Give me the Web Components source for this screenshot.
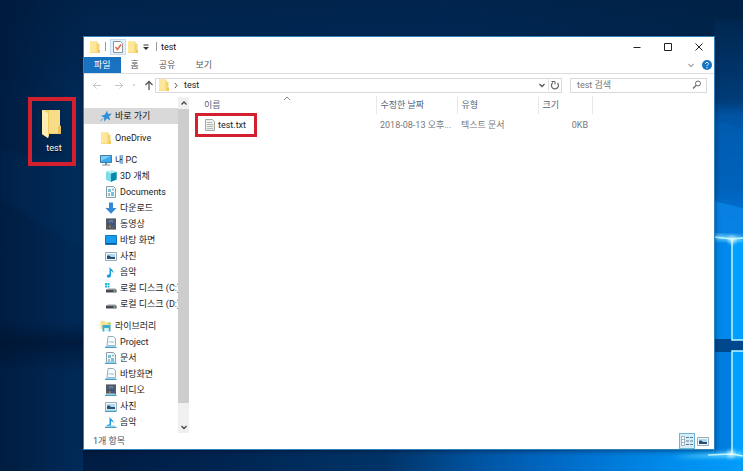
<!DOCTYPE html>
<html lang="ko">
<head>
<meta charset="utf-8">
<title>test</title>
<style>
html,body{height:100%;margin:0}
body{font:9px/16px Roboto,"Noto Sans CJK KR",sans-serif;color:#222;overflow:hidden}
</style>
</head>
<body>
<desk-top>
  <desktop-shortcut label="test"></desktop-shortcut>
  <explorer-window>
    <title-bar slot="title" label="test"></title-bar>
    <ribbon-tabs slot="ribbon"></ribbon-tabs>
    <address-bar slot="address" folder="test"></address-bar>
    <nav-pane slot="nav">
      <nav-group>
        <nav-item icon="star" root selected>바로 가기</nav-item>
      </nav-group>
      <nav-group>
        <nav-item icon="folder" root>OneDrive</nav-item>
      </nav-group>
      <nav-group>
        <nav-item icon="pc" root>내 PC</nav-item>
        <nav-item icon="cube">3D 개체</nav-item>
        <nav-item icon="doc">Documents</nav-item>
        <nav-item icon="down">다운로드</nav-item>
        <nav-item icon="film">동영상</nav-item>
        <nav-item icon="desktop">바탕 화면</nav-item>
        <nav-item icon="photo">사진</nav-item>
        <nav-item icon="music">음악</nav-item>
        <nav-item icon="drivec">로컬 디스크 (C:)</nav-item>
        <nav-item icon="drive">로컬 디스크 (D:)</nav-item>
      </nav-group>
      <nav-group>
        <nav-item icon="library" root>라이브러리</nav-item>
        <nav-item icon="libfile">Project</nav-item>
        <nav-item icon="libdoc">문서</nav-item>
        <nav-item icon="libfile">바탕화면</nav-item>
        <nav-item icon="libfilm">비디오</nav-item>
        <nav-item icon="libphoto">사진</nav-item>
        <nav-item icon="libmusic">음악</nav-item>
      </nav-group>
    </nav-pane>
    <file-list slot="files"></file-list>
    <status-bar slot="status">1개 항목</status-bar>
  </explorer-window>
</desk-top>
<script>
const stand = '<path d="M1 9.5h9l1.5 2.500H0z" fill="#9ad0e6"/><path d="M0 11.500h11.500" stroke="#4a9cbd"/>';
const note = '<path d="M4.500 0.500C5 3 9 3.500 8.500 7.500C8 5.800 7 5.200 6 5V9.500C6 12 2 12.500 1.800 10.300C1.800 8.700 3.300 8.300 4.500 8.600z" fill="#1b9ade"/>';
const film = '<path d="M1 0.500h10v11H1z" fill="#343a43"/><path d="M2 1.500v9M10 1.500v9" stroke="#b9bec5" stroke-dasharray="1 1"/><path d="M3.500 1.500h5v4h-5z" fill="#66809d"/><path d="M3.500 6.500h5v4h-5z" fill="#8c7564"/><path d="M5 3l3 2v4l-2 1z" fill="#38588b"/>';
const docu = '<path d="M1.500 0.500h7l2 2v9h-9z" fill="#f3fafc" stroke="#8a9da6"/><path d="M3 3h3v3H3zM6 6h3v4H6z" fill="#79c0d8"/><path d="M4 7v3M8 2.500v2" stroke="#4f8298"/>';
const photo = '<path d="M0.500 2.500h11v8H0.500z" fill="#f4f8fb" stroke="#9aabb8"/><path d="M2 4h8v5H2z" fill="#aed9f0"/><path d="M2 6c2-1 3 0 4 1h4v2H2z" fill="#274f75"/>';
const disk = '<path d="M1.500 7.500L3 6h7l1.500 1.500z" fill="#c9cdd0"/><path d="M1 7.500h10.500v3H1z" fill="#464b50"/><path d="M8.500 9h2" stroke="#b7e6bb"/>';
const folder = '<path d="M1 0.500h7.500v2L10.500 3v9H1z" fill="#f3d470"/><path d="M1 0.500h6.500v11H1z" fill="#ffe79a"/><path d="M9 9h2v3H9z" fill="#f0c95c"/>';
const chev = '<path d="M3.500 5l2.500 2.500 2.500-2.500" fill="none" stroke="currentColor" stroke-width="1.300"/>';
const ICONS = {
  folder,
  star:'<path d="M7 0.500l1 3.500 4-.500-3 3 1.500 4-3.500-2-3 3 .2-4L1 6l4-1.500z" fill="#2f8fd8"/><path d="M3 8.500L0.500 11" stroke="#75899a"/>',
  pc:'<path d="M0.500 1.500h11v7H0.500z" fill="#39a9ee" stroke="#407da6"/><path d="M1 2h10L1 7z" fill="#79cdf8"/><path d="M5 9h2v1.500h3v1H2v-1h3z" fill="#7893a5"/>',
  cube:'<path d="M1 2l6-1.500L11.500 2v7.500L6 11.800 1 9.500z" fill="#25b1ca"/><path d="M1 2l5 1.500V11.800L1 9.500z" fill="#7bdde8"/><path d="M6 3.500L11.500 2v7.500L6 11.800z" fill="#0787aa"/><path d="M1 2l6-1.500L11.500 2 6 3.500z" fill="#b9f0f5"/>',
  doc:docu,
  down:'<path d="M4 0.500h4V6h3.500L6 11.800 0.500 6H4z" fill="#3489d4"/>',
  film,
  desktop:'<path d="M0.500 1.500h11v9H0.500z" fill="#189cf0" stroke="#1377bb"/><path d="M1 9.500h10" stroke="#0d5d98"/>',
  photo, music:note,
  drivec:disk+'<path d="M0 1h2v2H0zM2.500 1h2v2h-2zM0 3.500h2v2H0zM2.500 3.500h2v2h-2z" fill="#20b6dc"/>',
  drive:disk,
  library:'<path d="M0.500 1h4l1 1.500h5V9h-10z" fill="#ffe08a"/><path d="M2.500 5h8v6.500h-2V8h-4v3.500h-2z" fill="#3aaed0"/><path d="M4.500 8h4v3h-4z" fill="#d6f1f2"/><path d="M8 2.500h3v2H8z" fill="#a8d579"/>',
  libfile:'<path d="M3 0.500h5.500l2 2v7H2z" fill="#f7fbfc" stroke="#9aaeb8"/><path d="M3.500 6h5.500" stroke="#8fc5da"/>'+stand,
  libdoc:docu+stand, libfilm:film+stand, libphoto:photo+stand, libmusic:note+stand,
  text:'<path d="M1.500 0.500h7l2 2v9h-9z" fill="#eef0ee" stroke="#a3a9a5"/><path d="M3 3.500h5M3 5.500h6M3 7.500h6M3 9.500h6" stroke="#b3bab5"/>',
  check:'<path d="M1.500 0.500h7l2 2v9h-9z" fill="#fff" stroke="#8d9399"/><path d="M3.500 6l2 2.500L9 3.500" fill="none" stroke="#df6a3c" stroke-width="1.500"/>',
  menu:'<path d="M3.500 4h5" stroke="#333"/><path d="M3 6h6L6 9z" fill="#333"/>',
  min:'<path d="M2.500 6.500h7" stroke="#222"/>',
  max:'<path d="M2.500 2.500h7v7h-7z" fill="none" stroke="#222"/>',
  close:'<path d="M2.500 2.500l7 7M9.500 2.500l-7 7" stroke="#222"/>',
  chev,
  up2:'<path d="M3.500 7.500l2.500-2.500 2.500 2.500" fill="none" stroke="currentColor" stroke-width="1.300"/>',
  sort:'<path d="M3 7l3-3 3 3" fill="none" stroke="#8a8a8a"/>',
  right:'<path d="M5 4l2 2.500-2 2.500" fill="none" stroke="#555"/>',
  back:'<path d="M10 6.500H2.500M5.500 3.500l-3 3 3 3" fill="none" stroke="#c6c6c6"/>',
  fwd:'<path d="M2 6.500h7.500M6.500 3.500l3 3-3 3" fill="none" stroke="#c6c6c6"/>',
  dot:'<path d="M4.500 5.500h3L6 7z" fill="#bbb"/>',
  up:'<path d="M6 11V2.500M2.500 6L6 2.500 9.500 6" fill="none" stroke="#555" stroke-width="1.300"/>',
  refresh:'<path d="M4 3.500A3.500 3.500 0 1 0 8.500 4" fill="none" stroke="#666" stroke-width="1.200"/><path d="M2.500 2.500h3.500v3" fill="none" stroke="#666"/>',
  search:'<circle cx="7" cy="4.500" r="2.500" fill="none" stroke="#666"/><path d="M5 6.500L2 9.500" stroke="#666" stroke-width="1.300"/>',
  help:'<circle cx="6" cy="6" r="5" fill="#1474c4"/><path d="M4.500 4.800C4.500 2.800 7.500 2.900 7.500 4.700C7.500 5.800 6 5.700 6 7.200M6 8.200v1.200" fill="none" stroke="#fff"/>',
  details:'<path d="M0.500 1.500h3v9h-3z" fill="#fff" stroke="#a7b1b8"/><path d="M1 4.500h2M1 7.500h2" stroke="#a7b1b8"/><path d="M5 2.500h3M9 2.500h3M5 6h3M9 6h3M5 9.500h3M9 9.500h3" stroke="#5b7f96"/>',
  open:'<path d="M1 0h7v26L7 28 1 24z" fill="#f4d47c"/><path d="M6 0h13v16l1 1v7H7z" fill="#efcb68"/><path d="M8 0h11v15l1 2v6H8z" fill="#f8dc88"/><path d="M1 0l6 3v25L1 24z" fill="#ffeeb2"/><path d="M17 16h3v8h-3z" fill="#e9c05b"/>'
};
function define(name, html, setup){
  customElements.define(name, class extends HTMLElement{
    connectedCallback(){
      if(this.shadowRoot) return;
      this.attachShadow({mode:'open'}).innerHTML = '<style>*{box-sizing:border-box}button,input{font:inherit;color:inherit;border:0;background:none;padding:0;margin:0;outline:0}button{display:inline-flex;align-items:center;justify-content:center}</style>' + (typeof html==='function'?html(this):html);
      if(setup) setup(this);
    }
  });
}
define('ui-icon', el => {
  const open = el.getAttribute('name')==='open';
  return `<style>:host{display:block;flex:none;width:${open?22:12}px;height:${open?28:12}px}svg{display:block;width:100%;height:100%}</style>
  <svg viewBox="0 0 ${open?'22 28':'12 12'}" aria-hidden="true">${ICONS[el.getAttribute('name')]}</svg>`;
});
define('desk-top', `
<style>
:host{display:block;position:relative;height:100vh;overflow:hidden;background:#00234d}
.wall{position:absolute;inset:0;width:100%;height:100%}
</style>
<svg class="wall" viewBox="0 0 743 471" preserveAspectRatio="xMaxYMid slice" aria-hidden="true">
  <defs>
    <linearGradient id="sky"><stop offset="0" stop-color="#001c40"/><stop offset=".12" stop-color="#002c5b"/><stop offset=".6" stop-color="#002f60"/><stop offset="1" stop-color="#002850"/></linearGradient>
    <linearGradient id="top" x2="0" y2="1"><stop offset="0" stop-color="#001a3a" stop-opacity=".5"/><stop offset="1" stop-color="#001a3a" stop-opacity="0"/></linearGradient>
    <linearGradient id="ray" x2="0" y2="1"><stop offset="0" stop-color="#00264f"/><stop offset=".25" stop-color="#003c78"/><stop offset=".3" stop-color="#0054a4"/><stop offset=".53" stop-color="#0064c0"/><stop offset=".58" stop-color="#0078dc"/><stop offset="1" stop-color="#0a94f4"/></linearGradient>
    <linearGradient id="floor"><stop offset="0" stop-color="#001c42"/><stop offset=".2" stop-color="#002450"/><stop offset=".46" stop-color="#003468"/><stop offset=".6" stop-color="#0054a2"/><stop offset=".75" stop-color="#0070ce"/><stop offset=".9" stop-color="#008eee"/><stop offset="1" stop-color="#009cfc"/></linearGradient>
    <linearGradient id="hor" x2="0" y2="1"><stop offset="0" stop-color="#00122e" stop-opacity="0"/><stop offset=".4" stop-color="#00122e" stop-opacity=".6"/><stop offset="1" stop-color="#00122e" stop-opacity="0"/></linearGradient>
    <filter id="b" x="-20%" y="-200%" width="140%" height="500%"><feGaussianBlur stdDeviation="2"/></filter>
    <filter id="s"><feGaussianBlur stdDeviation=".6"/></filter>
  </defs>
  <path d="M0 0h743v471H0z" fill="url(#sky)"/>
  <path d="M0 0h743v100H0z" fill="url(#top)"/>
  <path d="M0 150l90 14v90L0 200z" fill="#003568" opacity=".2" filter="url(#b)"/>
  <path d="M0 322h90v50H0z" fill="url(#hor)"/>
  <path d="M83 445h660v26H83z" fill="url(#floor)"/>
  <path d="M714 20h29v320h-29z" fill="url(#ray)"/>
  <path d="M714 120l29 9v80l-29-8z" fill="#0062b8" opacity=".5"/>
  <path d="M714 201l29 7v30h-29z" fill="#0b83e6" opacity=".7"/>
  <path d="M714 240h18v100h-18z" fill="#0088ec"/>
  <path d="M714 351h29v105h-29z" fill="#007de0"/>
  <path d="M714 339h29v13h-29z" fill="#00488d"/>
  <path d="M732 240h11v100h-11zM732 351h11v103h-11z" fill="#00a0ff"/>
  <path d="M714 237l29 2" stroke="#8eeaff" stroke-width="4" filter="url(#b)"/>
  <path d="M670 457l62-5 11 1v4z" fill="#6fdcff" filter="url(#b)"/>
  <path d="M743 238l-11 1-18-2M732 239v101h11M743 351h-11v103l11 2M732 454l-24 1" fill="none" stroke="#baf8ff" stroke-width="1.500" filter="url(#s)"/>
  <circle cx="732" cy="240" r="3" fill="#fff" filter="url(#b)"/><circle cx="731" cy="454" r="3" fill="#fff" filter="url(#b)"/>
</svg>
<slot></slot>`);
define('desktop-shortcut', el => `
<style>
:host{position:absolute;left:28px;top:97px}
button{flex-direction:column;width:48px;height:69px;border:4px solid #d3202f;color:#fff;padding-top:9px;gap:2px;justify-content:flex-start;text-shadow:0 1px 1px #000}
span{padding-left:4px}
</style>
<button><ui-icon name="open"></ui-icon><span>${el.getAttribute('label')}</span></button>`);
define('explorer-window', `
<style>
:host{position:absolute;inset:36px 28px 21px 83px;display:flex;flex-direction:column;background:#fff;border:1px solid #2f83b8;box-shadow:0 1px 5px rgba(0,10,40,.5)}
.body{flex:1;display:flex;min-height:0}
slot{display:contents}
</style>
<slot name="title"></slot><slot name="ribbon"></slot><slot name="address"></slot>
<div class="body"><slot name="nav"></slot><slot name="files"></slot></div>
<slot name="status"></slot>`);
define('title-bar', el => `
<style>
:host{display:flex;align-items:center;height:19px;padding-left:5px;color:#111}
.sep{width:1px;height:9px;background:#999;margin:0 4px}
.on{width:16px;height:16px;background:#e4f1fa;border:1px solid #c3def1}
.quick{display:flex;align-items:center;gap:1px}
.win{margin-left:auto;display:flex}
.win button{width:31px;height:19px}
</style>
<ui-icon name="folder"></ui-icon><i class="sep"></i>
<div class="quick"><button class="on" aria-label="속성"><ui-icon name="check"></ui-icon></button>
<button aria-label="새 폴더"><ui-icon name="folder"></ui-icon></button>
<button aria-label="사용자 지정"><ui-icon name="menu"></ui-icon></button></div>
<i class="sep"></i><span>${el.getAttribute('label')}</span>
<div class="win"><button aria-label="최소화"><ui-icon name="min"></ui-icon></button><button aria-label="최대화"><ui-icon name="max"></ui-icon></button><button aria-label="닫기"><ui-icon name="close"></ui-icon></button></div>`);
define('ribbon-tabs', `
<style>
:host{display:flex;align-items:center;height:17px;border-bottom:1px solid #dcdde0;color:#555}
.tab{height:16px;padding:0 10px}
.file{background:#1972c0;color:#fff}
.end{margin-left:auto;display:flex;gap:4px;padding-right:1px;color:#aaa}
</style>
<button class="tab file">파일</button><button class="tab">홈</button><button class="tab">공유</button><button class="tab">보기</button>
<div class="end"><button aria-label="리본 확장"><ui-icon name="chev"></ui-icon></button><button aria-label="도움말"><ui-icon name="help"></ui-icon></button></div>`);
define('address-bar', el => `
<style>
:host{display:flex;align-items:center;height:22px;padding:0 7px}
.move{display:flex;width:64px;justify-content:space-between}
.move div{display:flex}
.move .arrows{gap:10px}
.path,.find{display:flex;align-items:center;height:15px;border:1px solid #d9d9d9}
.path{flex:1;margin-right:8px;padding-left:2px;color:#222}
.crumb{padding:0 2px}
.tools{margin-left:auto;display:flex;color:#555}
.tools button+button{border-left:1px solid #e2e2e2}
.find{flex:0 1 137px;padding:0 3px 0 6px}
input{flex:1;min-width:0;height:13px}
input::placeholder{color:#777;opacity:1}
</style>
<div class="move"><div class="arrows"><button aria-label="뒤로"><ui-icon name="back"></ui-icon></button><button aria-label="앞으로"><ui-icon name="fwd"></ui-icon></button></div>
<button aria-label="최근 위치"><ui-icon name="dot"></ui-icon></button><button aria-label="위로"><ui-icon name="up"></ui-icon></button></div>
<div class="path"><ui-icon name="folder"></ui-icon><ui-icon name="right"></ui-icon><button class="crumb">${el.getAttribute('folder')}</button>
<div class="tools"><button aria-label="이전 위치"><ui-icon name="chev"></ui-icon></button><button aria-label="새로 고침"><ui-icon name="refresh"></ui-icon></button></div></div>
<div class="find"><input type="search" aria-label="test 검색" placeholder="test 검색"><button aria-label="검색"><ui-icon name="search"></ui-icon></button></div>`);
define('nav-pane', `
<style>
:host{flex:none;display:flex;width:105px}
nav{flex:1;min-width:0;overflow:hidden;display:flex;flex-direction:column;gap:6px;padding-top:12px}
.bar{width:11px;flex:none;display:flex;flex-direction:column;background:#f0f0f0;margin-top:1px;color:#444}
.bar button{height:12px}
.thumb{flex:1;background:#cdcdcd;margin-bottom:18px}
.bar ui-icon{margin:0 -1px}
</style>
<nav><slot></slot></nav>
<div class="bar"><button aria-label="위로 스크롤"><ui-icon name="up2"></ui-icon></button><div class="thumb"></div><button aria-label="아래로 스크롤"><ui-icon name="chev"></ui-icon></button></div>`);
define('nav-group', `<style>:host{display:block}</style><slot></slot>`);
define('nav-item', el => `
<style>
:host{display:block}
a{display:flex;align-items:center;gap:3px;height:16px;padding-left:21px;color:#222;text-decoration:none;white-space:nowrap}
:host([root]) a{padding-left:16px}
:host([selected]) a{background:#d9d9d9}
</style>
<a href="#"><ui-icon name="${el.getAttribute('icon')}"></ui-icon><span><slot></slot></span></a>`);
define('file-list', `
<style>
:host{flex:1;min-width:0;display:block;padding-left:10px}
table{border-collapse:collapse;table-layout:fixed;width:100%}
th{font-weight:400;text-align:left;color:#56657a;height:18px;padding:0 4px;border-right:1px solid #e8e8e8;position:relative}
th:last-child{border:0}
td{height:22px;padding:0 4px;color:#777;white-space:nowrap}
th:first-child,td:first-child{padding-left:5px}
td:first-child{color:#222}
.num{text-align:right}
.file{display:flex;align-items:center;gap:2px;position:relative;width:max-content}
.mark{position:absolute;inset:-4px -11px -4px -9px;border:3px solid #d3202f}
.sort{position:absolute;left:82px;top:-3px}
.n{width:177px}.d{width:81px}.s{width:54px}
</style>
<table>
<colgroup><col class="n"><col class="d"><col class="d"><col class="s"><col></colgroup>
<thead><tr><th>이름<ui-icon class="sort" name="sort"></ui-icon></th><th>수정한 날짜</th><th>유형</th><th>크기</th><th></th></tr></thead>
<tbody><tr><td><span class="file"><ui-icon name="text"></ui-icon>test.txt<i class="mark"></i></span></td><td>2018-08-13 오후...</td><td>텍스트 문서</td><td class="num">0KB</td><td></td></tr></tbody>
</table>`);
define('status-bar', `
<style>
:host{display:flex;align-items:center;height:16px;padding:0 4px 0 9px;color:#44546a}
.views{margin-left:auto;display:flex;gap:1px}
button{width:14px;height:16px}
.on{width:16px;background:#d5edf8;border:1px solid #6db3d6}
</style>
<slot></slot><div class="views"><button class="on" aria-label="자세히"><ui-icon name="details"></ui-icon></button><button aria-label="큰 아이콘"><ui-icon name="photo"></ui-icon></button></div>`);
</script>
</body>
</html>
